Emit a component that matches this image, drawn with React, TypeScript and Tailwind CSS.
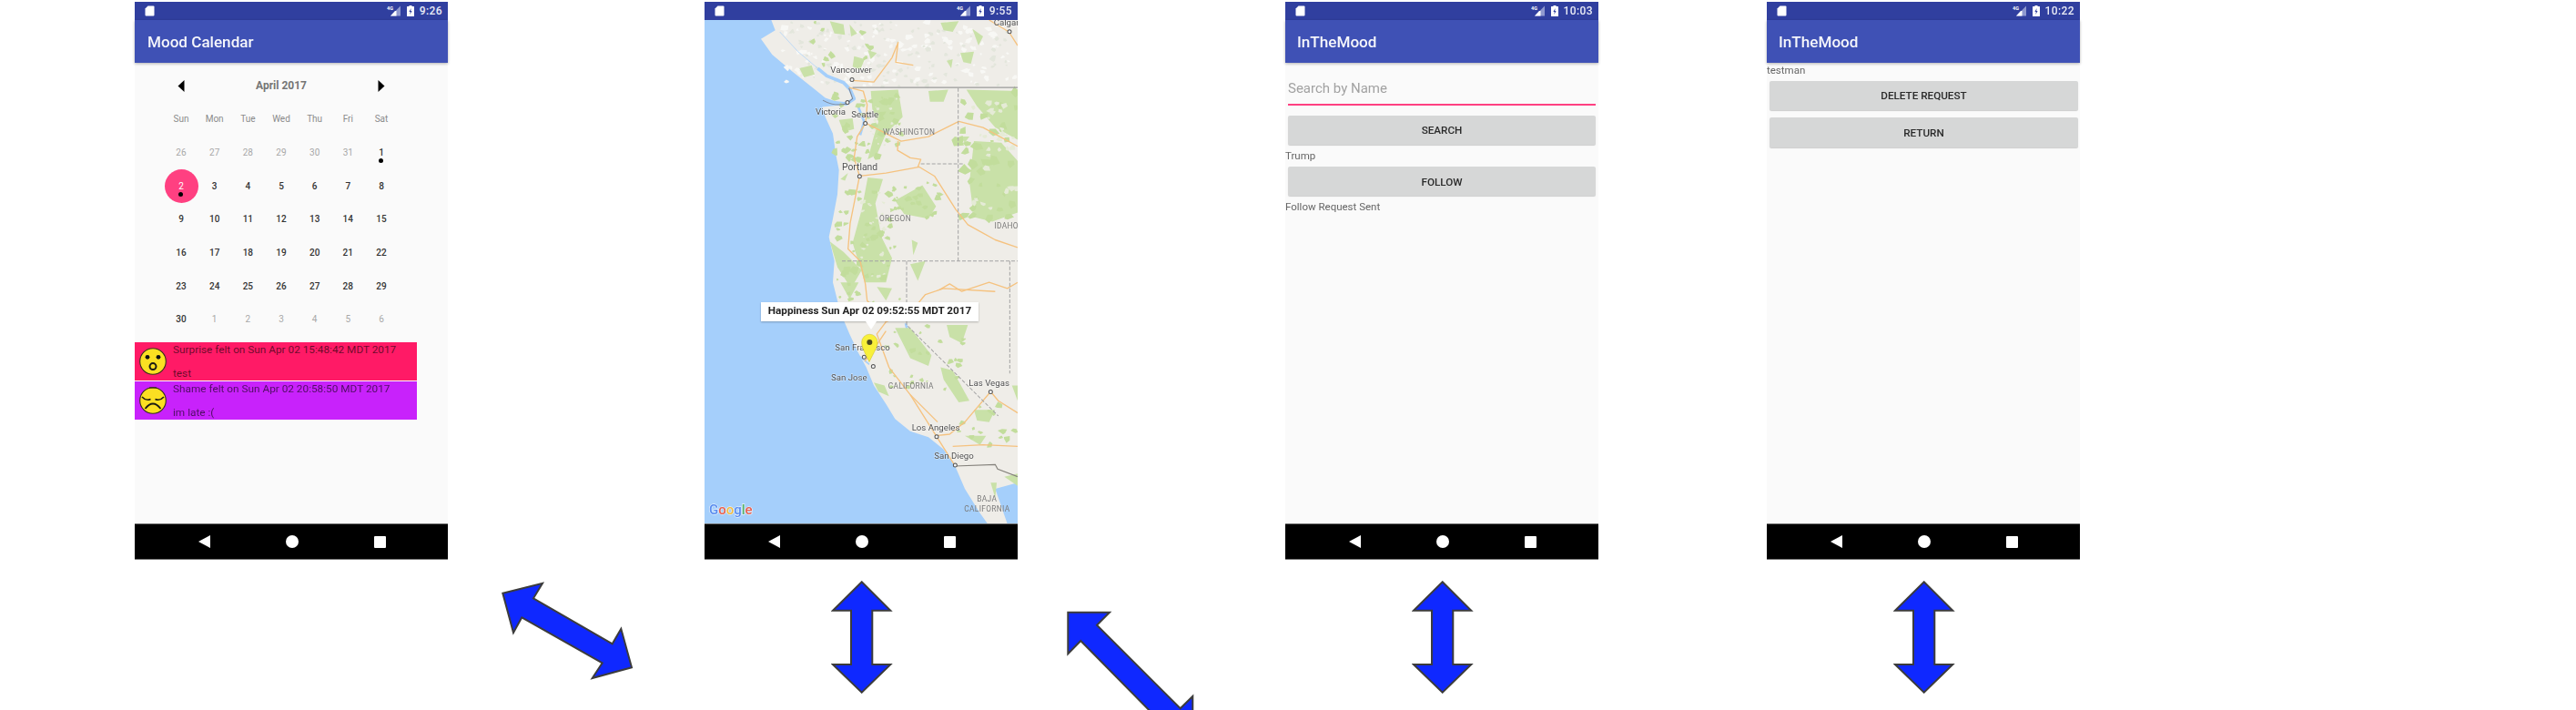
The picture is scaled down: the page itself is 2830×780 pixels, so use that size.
import React from "react";

function SdIcon() {
  return (
    <svg width="11" height="12" viewBox="0 0 11 12" className="shrink-0">
      <path d="M3.5 0.5 H9.5 Q10.5 0.5 10.5 1.5 V10.5 Q10.5 11.5 9.5 11.5 H1.5 Q0.5 11.5 0.5 10.5 V3.5 Z" fill="#fff" />
    </svg>
  );
}

function SignalIcon() {
  return (
    <svg width="15" height="12" viewBox="0 0 15 12" className="shrink-0">
      <path d="M15 0.5 V11.5 H4 Z" fill="#8f99cf" />
      <path d="M10.5 6 V11.5 H4 L9 6 Z" fill="#fff" />
      <text x="0" y="5" fontSize="5.5" fontWeight="700" fill="#fff">4G</text>
    </svg>
  );
}

function BatteryIcon() {
  return (
    <svg width="8" height="12" viewBox="0 0 8 12" className="shrink-0">
      <path d="M2.5 0 H5.5 V1 H7.5 Q8 1 8 1.5 V11.5 Q8 12 7.5 12 H0.5 Q0 12 0 11.5 V1.5 Q0 1 0.5 1 H2.5 Z" fill="#fff" />
      <path d="M4.6 3 L2.4 7 H3.8 L3.4 10 L5.6 6 H4.2 Z" fill="#303f9f" />
    </svg>
  );
}

function StatusBar({ time }: { time: string }) {
  return (
    <div className="h-5 shrink-0 bg-[#303f9f] flex items-center pl-[11px] pr-[6px]">
      <SdIcon />
      <div className="ml-auto flex items-center">
        <SignalIcon />
        <div className="ml-[7px]"><BatteryIcon /></div>
        <span className="ml-[6px] text-[12px] font-medium text-white/90 tracking-[0.4px]">{time}</span>
      </div>
    </div>
  );
}

function AppBar({ title, pad }: { title: string; pad: string }) {
  return (
    <div className={`h-[47px] shrink-0 bg-[#3f51b5] flex items-center pt-[2px] shadow-[0_1px_3px_rgba(0,0,0,0.3)] relative ${pad}`}>
      <span className="text-[17.1px] font-medium text-white/95 leading-none">{title}</span>
    </div>
  );
}

function NavBar() {
  return (
    <div className="h-10 shrink-0 bg-black border-t border-b border-[#777] flex items-center">
      <svg width="13" height="14" viewBox="0 0 13 14" className="ml-[70px]"><path d="M13 0 V14 L0 7 Z" fill="#fff" /></svg>
      <div className="ml-[83px] w-[14px] h-[14px] rounded-full bg-white" />
      <div className="ml-[83px] w-[13px] h-[13px] bg-white rounded-[1px]" />
    </div>
  );
}

function Phone({ time, className, children }: { time: string; className: string; children: React.ReactNode }) {
  return (
    <div className={`w-[344px] h-[613.4px] shrink-0 flex flex-col bg-[#fafafa] blur-[0.45px] ${className}`}>
      <StatusBar time={time} />
      {children}
      <NavBar />
    </div>
  );
}

function SurpriseFace() {
  return (
    <svg width="30" height="30" viewBox="0 0 30 30" className="shrink-0">
      <circle cx="15" cy="15" r="14.3" fill="#fbdf22" stroke="#33301a" strokeWidth="1.1" />
      <circle cx="9" cy="10.3" r="2.4" fill="#111" />
      <circle cx="21" cy="10.3" r="2.4" fill="#111" />
      <circle cx="15" cy="20.6" r="3.5" fill="#fbdf22" stroke="#1c1c14" strokeWidth="2" />
    </svg>
  );
}

function ShameFace() {
  return (
    <svg width="30" height="30" viewBox="0 0 30 30" className="shrink-0">
      <circle cx="15" cy="15" r="14.3" fill="#fbdf22" stroke="#33301a" strokeWidth="1.1" />
      <path d="M11 1 H19" stroke="#33301a" strokeWidth="1.2" />
      <path d="M3 11 Q7.5 16 12.5 13.5 M17.5 13.5 Q22.5 16 27 11" fill="none" stroke="#1c1c14" strokeWidth="1.5" />
      <path d="M6.5 24 Q15 13 23.5 24" fill="none" stroke="#1c1c14" strokeWidth="1.8" />
    </svg>
  );
}

type Day = { d: number; muted?: boolean; dot?: boolean; selected?: boolean };

const weeks: Day[][] = [
  [{ d: 26, muted: true }, { d: 27, muted: true }, { d: 28, muted: true }, { d: 29, muted: true }, { d: 30, muted: true }, { d: 31, muted: true }, { d: 1, dot: true }],
  [{ d: 2, selected: true, dot: true }, { d: 3 }, { d: 4 }, { d: 5 }, { d: 6 }, { d: 7 }, { d: 8 }],
  [{ d: 9 }, { d: 10 }, { d: 11 }, { d: 12 }, { d: 13 }, { d: 14 }, { d: 15 }],
  [{ d: 16 }, { d: 17 }, { d: 18 }, { d: 19 }, { d: 20 }, { d: 21 }, { d: 22 }],
  [{ d: 23 }, { d: 24 }, { d: 25 }, { d: 26 }, { d: 27 }, { d: 28 }, { d: 29 }],
  [{ d: 30 }, { d: 1, muted: true }, { d: 2, muted: true }, { d: 3, muted: true }, { d: 4, muted: true }, { d: 5, muted: true }, { d: 6, muted: true }],
];

function DayCell({ day }: { day: Day }) {
  const color = day.selected ? "text-white" : day.muted ? "text-[#a8a8a8]" : "text-[#333]";
  return (
    <div className="h-[36.67px] flex items-center justify-center relative">
      {day.selected && <div className="absolute inset-0 m-auto w-[37px] h-[37px] rounded-full bg-[#ff4081]" />}
      <span className={`relative text-[10px] ${day.muted || day.selected ? "" : "font-medium"} ${color}`}>{day.d}</span>
      {day.dot && <div className="absolute left-1/2 top-[25px] -ml-[2.5px] w-[5px] h-[5px] rounded-full bg-black" />}
    </div>
  );
}

function MoodRow({ bg, line, note, face, className }: { bg: string; line: string; note: string; face: React.ReactNode; className: string }) {
  return (
    <div className={`w-[310px] h-[42.6px] flex items-center pl-[5px] ${bg} ${className}`}>
      {face}
      <div className="ml-[7px] flex flex-col text-[11.8px] text-black/60 leading-[14px] h-full justify-between py-[1px]">
        <span className="whitespace-nowrap">{line}</span>
        <span>{note}</span>
      </div>
    </div>
  );
}

function CalendarScreen() {
  return (
    <div className="flex-1 flex flex-col pt-[7px]">
      <div className="w-[256.67px] ml-[32.67px]">
        <div className="grid grid-cols-7 h-[36.67px] items-center">
          <div className="flex justify-center">
            <svg width="8" height="13" viewBox="0 0 8 13"><path d="M7.5 0 V13 L0.5 6.5 Z" fill="#000" /></svg>
          </div>
          <div className="col-span-5 text-center text-[12px] font-bold text-[#757575]">April 2017</div>
          <div className="flex justify-center">
            <svg width="8" height="13" viewBox="0 0 8 13"><path d="M0.5 0 V13 L7.5 6.5 Z" fill="#000" /></svg>
          </div>
        </div>
        <div className="grid grid-cols-7 h-[36.67px] items-center text-center text-[10px] text-[#8a8a8a]">
          {["Sun", "Mon", "Tue", "Wed", "Thu", "Fri", "Sat"].map((d) => (
            <span key={d}>{d}</span>
          ))}
        </div>
        {weeks.map((w, i) => (
          <div key={i} className="grid grid-cols-7">
            {w.map((day, j) => (
              <DayCell key={j} day={day} />
            ))}
          </div>
        ))}
      </div>
      <MoodRow className="mt-[6.4px]" bg="bg-[#ff1a66]" line="Surprise felt on Sun Apr 02 15:48:42 MDT 2017" note="test" face={<SurpriseFace />} />
      <MoodRow className="mt-[0.6px]" bg="bg-[#c822fb]" line="Shame felt on Sun Apr 02 20:58:50 MDT 2017" note="im late :(" face={<ShameFace />} />
    </div>
  );
}

const greens = [
  "355,225 395,215 405,245 370,255",
  "455,70 500,80 505,115 470,110",
  "520,80 545,110 525,120",
  "535,185 570,195 555,230 530,220",
  "580,165 610,175 590,195",
  "840,200 860,195 855,225",
  "885,175 930,170 920,210 895,205",
  "820,75 880,70 860,105 830,100",
  "925,95 960,120 945,150",
  "485,395 530,390 535,425 500,435",
  "590,300 680,295 695,385 640,440 610,510 580,525 600,450 615,400 595,360",
  "780,300 845,295 830,335 785,335",
  "905,295 1074,300 1074,460 1000,420 940,350",
  "930,465 1020,470 1074,530 1074,700 990,730 930,715 915,600",
  "580,585 630,590 605,670 625,780 660,850 640,930 570,930 530,800 560,690",
  "670,660 760,610 805,680 780,720 700,705",
  "455,795 500,830 560,890 525,950 480,880",
  "490,590 515,570 505,595",
  "725,790 745,800 730,840",
  "720,870 770,860 745,925",
  "885,450 915,450 900,470",
  "490,930 550,930 520,985",
  "610,945 660,950 640,990",
  "670,1080 720,1080 790,1170 780,1205 720,1180",
  "820,1210 860,1220 915,1320 880,1325 830,1250",
  "930,1350 1000,1350 980,1390 940,1385",
  "900,1435 970,1435 950,1465",
  "840,1070 910,1070 890,1130 850,1110",
  "1030,1570 1074,1560 1074,1600",
  "1055,1270 1074,1270 1074,1320",
  "600,1260 635,1270 650,1305 615,1290",
  "985,1590 1005,1590 1000,1640",
];

const roads = [
  "M518,288 L565,300 L578,345 L573,405 L545,450 L535,520 L553,580 L522,735 L515,820 L555,860 L572,935 L578,990 L640,1060 L610,1100 L650,1210 L720,1300 L805,1435 L865,1530",
  "M573,405 L660,450 L690,465 L780,450 L880,400 L960,420 L1074,482",
  "M553,580 L640,570 L750,550 L800,580 L870,690 L910,740 L1000,790 L1074,815",
  "M680,465 L678,495 L720,520 L755,525 L745,550",
  "M530,265 L600,270 L660,190 L680,140 L672,205 L730,215",
  "M980,66 L1045,105 L1074,150",
  "M815,955 L850,935 L890,960 L980,930 L1040,950 L1074,930",
  "M640,1060 L665,1050 L720,1030 L770,970 L830,950 L1000,960",
  "M805,1435 L850,1430 L900,1390 L985,1290 L1010,1320 L1074,1360",
  "M860,1470 L960,1465 L1074,1470",
  "M640,1090 L600,1150 L570,1190",
  "M720,1300 L810,1390",
];

function specks(seed: number, count: number, x0: number, y0: number, x1: number, y1: number, size: number) {
  let s = seed;
  const rnd = () => {
    s = (s * 16807) % 2147483647;
    return s / 2147483647;
  };
  const out: string[] = [];
  for (let i = 0; i < count; i++) {
    const cx = x0 + rnd() * (x1 - x0);
    const cy = y0 + rnd() * (y1 - y0);
    const r = size * (0.5 + rnd());
    const pts: string[] = [];
    for (let k = 0; k < 5; k++) {
      const a = (k / 5) * Math.PI * 2 + rnd();
      const rr = r * (0.6 + rnd() * 0.7);
      pts.push(`${(cx + Math.cos(a) * rr).toFixed(0)},${(cy + Math.sin(a) * rr * 0.8).toFixed(0)}`);
    }
    out.push(pts.join(" "));
  }
  return out;
}

const mountainsLight = specks(11, 130, 300, 70, 1074, 285, 9);
const mountainsDark = specks(23, 110, 330, 70, 1074, 285, 7);
const greenSpecks = [
  ...specks(37, 45, 470, 300, 700, 530, 11),
  ...specks(41, 35, 880, 300, 1074, 720, 14),
  ...specks(53, 40, 480, 600, 680, 930, 11),
  ...specks(59, 25, 660, 600, 820, 720, 9),
  ...specks(67, 22, 480, 930, 700, 1060, 9),
  ...specks(71, 26, 640, 1060, 900, 1300, 8),
  ...specks(73, 14, 880, 1330, 1074, 1480, 10),
  ...specks(79, 10, 400, 70, 620, 240, 10),
];
const landHoles = [
  ...specks(83, 30, 930, 320, 1074, 700, 9),
  ...specks(89, 18, 590, 320, 680, 480, 5),
  ...specks(97, 24, 560, 620, 640, 920, 6),
];

function MapView() {
  return (
    <div className="flex-1 relative overflow-hidden bg-[#a5cffb]">
      <svg viewBox="42 66 1032 1659" className="block w-full h-full blur-[0.7px]" preserveAspectRatio="none">
        <path
          d="M262,66 L275,100 L228,128 L265,180 L330,235 L400,290 L440,322 L505,345 L430,352 L440,385 L465,440 L475,510 L485,560 L480,640 L465,720 L452,780 L470,860 L465,930 L475,970 L490,1030 L520,1100 L548,1160 L575,1210 L600,1270 L640,1330 L670,1380 L720,1420 L780,1440 L830,1480 L870,1540 L900,1610 L950,1690 L975,1725 L1074,1725 L1074,66 Z"
          fill="#efede8"
        />
        {mountainsLight.map((p) => (
          <polygon key={p} points={p} fill="#f8f8f5" />
        ))}
        {mountainsDark.map((p) => (
          <polygon key={p} points={p} fill="#e3e6dc" />
        ))}
        <path d="M290,105 L350,170 L415,225" fill="none" stroke="#a5cffb" strokeWidth="2" />
        <path d="M415,225 L445,250 L500,272 L522,295 L535,325 L510,342 L440,335" fill="none" stroke="#a5cffb" strokeWidth="11" strokeLinejoin="round" />
        <path d="M548,350 L568,400 L555,445" fill="none" stroke="#a5cffb" strokeWidth="8" strokeLinejoin="round" />
        <path d="M555,1175 L585,1200" fill="none" stroke="#a5cffb" strokeWidth="5" />
        <path d="M1000,1610 L1074,1590 L1074,1725 L1040,1725 Z" fill="#a5cffb" />
        <path d="M705,1065 L712,1095" fill="none" stroke="#a5cffb" strokeWidth="8" />
        {greens.map((p) => (
          <polygon key={p} points={p} fill="#c9e1a8" />
        ))}
        {greenSpecks.map((p) => (
          <polygon key={p} points={p} fill="#c2dd9c" />
        ))}
        {landHoles.map((p) => (
          <polygon key={p} points={p} fill="#e5ebd6" />
        ))}
        {roads.map((d) => (
          <path key={d} d={d} fill="none" stroke="#f5c27f" strokeWidth="4" strokeLinejoin="round" />
        ))}
        <path d="M530,288 L1074,288" stroke="#9a9a9a" strokeWidth="4" />
        <path d="M432,330 Q470,352 510,342 L530,325 L518,290" fill="none" stroke="#7d8594" strokeWidth="3" />
        <path
          d="M878,290 V860 M755,540 H895 M495,860 H1074 M708,860 V1070 L1010,1370 M1048,860 V1230"
          fill="none"
          stroke="#a3a3a3"
          strokeWidth="3"
          strokeDasharray="12 6"
        />
        <path d="M868,1535 L1000,1530 L1008,1545 L1074,1570" fill="none" stroke="#85827c" strokeWidth="3.5" />
        {[
          [1047, 104], [528, 262], [513, 337], [572, 406], [553, 581], [568, 1176], [598, 1207], [985, 1291], [807, 1438], [868, 1532],
        ].map(([cx, cy]) => (
          <circle key={cx} cx={cx} cy={cy} r="6" fill="#f4f4f4" stroke="#555" strokeWidth="3" />
        ))}
        <g fill="#4d4d4d" fontSize="29" stroke="#ffffff" strokeOpacity="0.6" strokeWidth="3" paintOrder="stroke">
          <text x="995" y="85">Calgary</text>
          <text x="457" y="241">Vancouver</text>
          <text x="408" y="378">Victoria</text>
          <text x="526" y="386">Seattle</text>
          <text x="495" y="560" fontSize="31">Portland</text>
          <text x="472" y="1155">San Francisco</text>
          <text x="459" y="1253">San Jose</text>
          <text x="913" y="1271">Las Vegas</text>
          <text x="725" y="1418">Los Angeles</text>
          <text x="799" y="1510">San Diego</text>
        </g>
        <g fill="#7a7a7a" fontSize="25" letterSpacing="1">
          <text x="630" y="444">WASHINGTON</text>
          <text x="618" y="730">OREGON</text>
          <text x="997" y="754">IDAHO</text>
          <text x="647" y="1279">CALIFORNIA</text>
          <text x="940" y="1652">BAJA</text>
          <text x="898" y="1685">CALIFORNIA</text>
        </g>
        <text x="57" y="1695" fontSize="45" fontWeight="500" stroke="#ffffff" strokeOpacity="0.7" strokeWidth="4" paintOrder="stroke">
          <tspan fill="#5a8def">G</tspan>
          <tspan fill="#e8604f">o</tspan>
          <tspan fill="#f2bc42">o</tspan>
          <tspan fill="#5a8def">g</tspan>
          <tspan fill="#57b266">l</tspan>
          <tspan fill="#e8604f">e</tspan>
        </text>
        <path d="M585,1192 C570,1160 560,1145 560,1127 A26,26 0 1 1 612,1127 C612,1145 600,1160 585,1192 Z" fill="#f8f03a" stroke="#c9bd2c" strokeWidth="1.5" />
        <circle cx="586" cy="1127" r="9" fill="#4a4820" />
      </svg>
      <div className="absolute left-[62px] top-[309.7px] w-[239px] h-[21px] bg-white shadow-[0_1px_2px_rgba(0,0,0,0.25)] flex items-center justify-center">
        <span className="text-[11.7px] font-bold text-[#222] whitespace-nowrap">Happiness Sun Apr 02 09:52:55 MDT 2017</span>
        <div className="absolute left-[114.7px] top-[21px] w-0 h-0 border-l-[6px] border-r-[6px] border-t-[9px] border-l-transparent border-r-transparent border-t-white" />
      </div>
    </div>
  );
}

function GrayButton({ label, className }: { label: string; className: string }) {
  return (
    <button className={`h-[32.4px] flex items-center justify-center pt-[2px] bg-[#d6d7d7] rounded-[2px] shadow-[0_1px_1px_rgba(0,0,0,0.18)] text-[11.7px] font-medium text-[#2a2a2a] ${className}`}>
      {label}
    </button>
  );
}

function SearchScreen() {
  return (
    <div className="flex-1 flex flex-col">
      <AppBar title="InTheMood" pad="pl-[13px]" />
      <div className="mx-[3px] h-[47px] flex flex-col">
        <span className="text-[15px] text-[#a2a2a2] h-[45px] flex items-end leading-[20px] pb-[7px] pt-[18px]">Search by Name</span>
        <div className="h-[2px] bg-[#ff4081]" />
      </div>
      <GrayButton label="SEARCH" className="mx-[3px] mt-[10.7px]" />
      <span className="mt-[4.5px] h-[15px] text-[11.5px] leading-[15px] text-[#666]">Trump</span>
      <GrayButton label="FOLLOW" className="mx-[3px] mt-[4.5px]" />
      <span className="mt-[5px] text-[11.5px] leading-[15px] text-[#666]">Follow Request Sent</span>
    </div>
  );
}

function RequestScreen() {
  return (
    <div className="flex-1 flex flex-col">
      <AppBar title="InTheMood" pad="pl-[13px]" />
      <span className="mt-[1px] text-[11.5px] leading-[15px] text-[#666]">testman</span>
      <GrayButton label="DELETE REQUEST" className="ml-[3px] mr-[2px] mt-[4px]" />
      <GrayButton label="RETURN" className="ml-[3px] mr-[2px] mt-[8px]" />
    </div>
  );
}

function VerticalArrow({ className }: { className: string }) {
  return (
    <svg viewBox="913 638 68 124" className={`w-[68px] h-[124px] shrink-0 ${className}`}>
      <path
        d="M946.7,639.3 L978.3,670.7 H958.3 V730 H978.3 L946.7,760.7 L915,730 H935 V670.7 H915 Z"
        fill="#0f28ff"
        stroke="#3c3c3c"
        strokeWidth="2"
      />
    </svg>
  );
}

export default function App() {
  return (
    <div className="w-[2830px] h-[780px] overflow-hidden bg-white font-['Roboto',sans-serif]">
      <div className="flex pl-[148px] pt-[2px] h-[616px]">
        <Phone time="9:26" className="">
          <AppBar title="Mood Calendar" pad="pl-[14px]" />
          <CalendarScreen />
        </Phone>
        <Phone time="9:55" className="ml-[282px]">
          <MapView />
        </Phone>
        <Phone time="10:03" className="ml-[294px]">
          <SearchScreen />
        </Phone>
        <Phone time="10:22" className="ml-[185px]">
          <RequestScreen />
        </Phone>
      </div>
      <div className="flex items-start">
        <svg viewBox="550 638 146 109" className="w-[146px] h-[109px] shrink-0 ml-[550px] mt-[22px]">
          <path
            d="M552.3,651.7 L596,640.7 L586,657.3 L672.7,707.3 L682.3,690.7 L694,733.3 L650.7,745 L661.7,728.3 L573.3,678.3 L564,695 Z"
            fill="#0f28ff"
            stroke="#3c3c3c"
            strokeWidth="2"
          />
        </svg>
        <VerticalArrow className="ml-[217px] mt-[22px]" />
        <svg viewBox="1171 670 141 143" className="w-[141px] h-[143px] shrink-0 ml-[190px] mt-[54px]">
          <path
            d="M1173.3,672.7 L1219,672.7 L1205,686.7 L1296.7,778.3 L1310.3,765 V810.7 H1264.7 L1278.7,796.7 L1187.3,704 L1173.3,718.3 Z"
            fill="#0f28ff"
            stroke="#3c3c3c"
            strokeWidth="2"
          />
        </svg>
        <VerticalArrow className="ml-[238.6px] mt-[22px]" />
        <VerticalArrow className="ml-[461.7px] mt-[22px]" />
      </div>
    </div>
  );
}
